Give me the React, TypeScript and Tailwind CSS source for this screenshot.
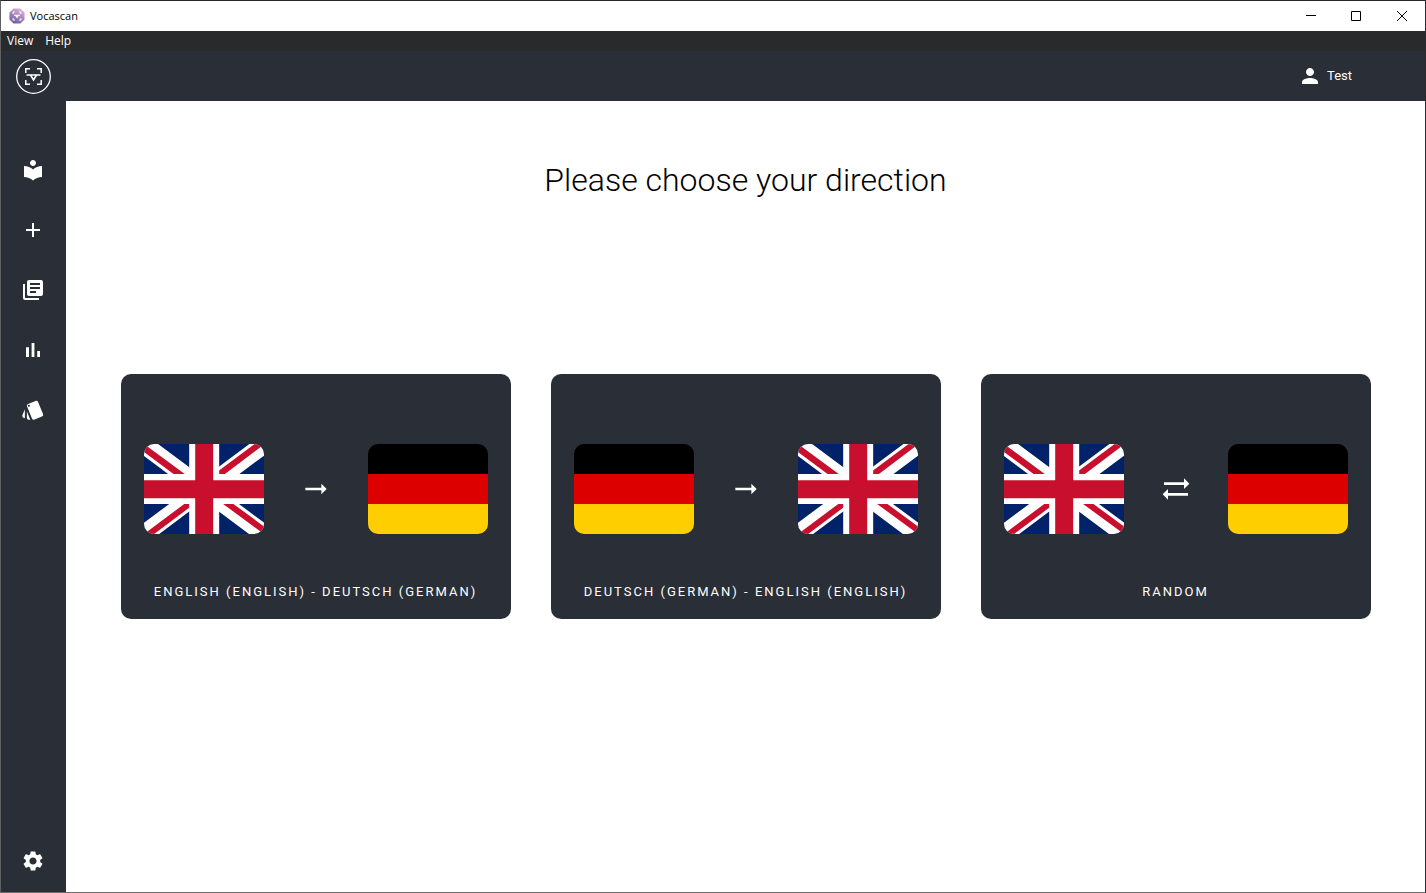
import React from "react";
import type { ComponentType } from "react";
import type { IconType } from "react-icons";
import {
  MdAdd,
  MdArrowRightAlt,
  MdLibraryBooks,
  MdLocalLibrary,
  MdPerson,
  MdSettings,
  MdStyle,
  MdSyncAlt,
} from "react-icons/md";

type Lang = "en" | "de";
type NavIcon = ComponentType<{ className?: string }>;

function BarChartIcon({ className }: { className?: string }) {
  return (
    <svg viewBox="0 0 24 24" className={className} fill="currentColor" aria-hidden="true">
      <path d="M5 9.200h3V19H5zM10.600 5h2.800v14h-2.800zM16.200 13H19v6h-2.800z" />
    </svg>
  );
}

const NAV: { label: string; Icon: NavIcon }[] = [
  { label: "Learn", Icon: MdLocalLibrary },
  { label: "Add vocabulary", Icon: MdAdd },
  { label: "Library", Icon: MdLibraryBooks },
  { label: "Progress", Icon: BarChartIcon },
  { label: "Custom learning", Icon: MdStyle },
];

const DIRECTIONS: { title: string; from: Lang; to: Lang; Icon: IconType }[] = [
  { title: "English (English) - Deutsch (German)", from: "en", to: "de", Icon: MdArrowRightAlt },
  { title: "Deutsch (German) - English (English)", from: "de", to: "en", Icon: MdArrowRightAlt },
  { title: "Random", from: "en", to: "de", Icon: MdSyncAlt },
];

function Flag({ lang }: { lang: Lang }) {
  return (
    <svg viewBox="0 0 640 480" className="h-[90px] w-[120px] shrink-0 rounded-[10px]" aria-hidden="true">
      {lang === "en" ? (
        <>
          <path fill="#012169" d="M0 0h640v480H0z" />
          <path
            fill="#fff"
            d="m75 0 244 181L562 0h78v62L400 241l240 178v61h-80L320 301 81 480H0v-60l239-178L0 64V0h75z"
          />
          <path
            fill="#c8102e"
            d="m424 281 216 159v40L369 281h55zm-184 20 6 35L54 480H0l240-179zM640 0v3L391 191l2-44L590 0h50zM0 0l239 176h-60L0 42V0z"
          />
          <path fill="#fff" d="M241 0v480h160V0H241zM0 160v160h640V160H0z" />
          <path fill="#c8102e" d="M0 193v96h640v-96H0zM273 0v480h96V0h-96z" />
        </>
      ) : (
        <>
          <path fill="#000" d="M0 0h640v160H0z" />
          <path fill="#d00" d="M0 160h640v160H0z" />
          <path fill="#ffce00" d="M0 320h640v160H0z" />
        </>
      )}
    </svg>
  );
}

function ScanMark() {
  return (
    <g fill="none" stroke="#fff">
      <path strokeWidth="1.5" d="M9.800 14V9.700H14M21 9.700h4.200V14M25.200 21v4.300H21M14 25.300H9.800V21" />
      <path strokeWidth="1.500" d="M10.500 16h14" />
      <path strokeWidth="1.600" d="M14.500 16l3 5 3-5" />
    </g>
  );
}

function AppIcon() {
  return (
    <svg viewBox="0 0 35 35" className="size-4" aria-hidden="true">
      <defs>
        <linearGradient id="appIconFill" x1="0.8" y1="0" x2="0.3" y2="1">
          <stop offset="0" stopColor="#e3b6d8" />
          <stop offset="1" stopColor="#6b5a9e" />
        </linearGradient>
      </defs>
      <path d="M10 1h15l9 9v15l-9 9H10l-9-9V10z" fill="url(#appIconFill)" />
      <g fill="none" stroke="#fff" strokeWidth="2.200">
        <path d="M9 13V9h4M22 9h4v4M26 22v4h-4M13 26H9v-4" />
        <path d="M11 16h13M14.500 16l3 5 3-5" />
      </g>
    </svg>
  );
}

function TitleBar() {
  return (
    <div className="flex h-[30px] shrink-0 items-center justify-between bg-white pl-2 text-black">
      <div className="flex items-center gap-[5px] font-['Open_Sans',sans-serif] text-[11px]">
        <AppIcon />
        <span>Vocascan</span>
      </div>
      <div className="flex h-full">
        <button type="button" aria-label="Minimize" className="flex w-[45px] items-center justify-center">
          <svg viewBox="0 0 10 10" className="size-[10px]" stroke="#000">
            <path d="M0 4.500h10" />
          </svg>
        </button>
        <button type="button" aria-label="Maximize" className="flex w-[46px] items-center justify-center">
          <svg viewBox="0 0 10 10" className="size-[10px]" fill="none" stroke="#000">
            <path d="M.5.5h9v9h-9z" />
          </svg>
        </button>
        <button type="button" aria-label="Close" className="flex w-[46px] items-center justify-center">
          <svg viewBox="0 0 10 10" className="size-[10px]" fill="none" stroke="#000">
            <path d="m0 0 10 10M10 0 0 10" />
          </svg>
        </button>
      </div>
    </div>
  );
}

function MenuBar() {
  return (
    <div className="flex h-5 shrink-0 items-center bg-[#292a2c] font-['Open_Sans',sans-serif] text-xs text-white">
      <button type="button" className="px-[6px]">View</button>
      <button type="button" className="px-[6px]">Help</button>
    </div>
  );
}

function NavItem({ label, Icon }: { label: string; Icon: NavIcon }) {
  return (
    <a href="#" aria-label={label} className="flex h-[60px] items-center justify-center">
      <Icon className="size-6" />
    </a>
  );
}

export default function App() {
  return (
    <div className="flex h-screen flex-col border border-t-[#26282c] border-r-[#292a2e] border-b-[#6b6b6b] border-l-[#606060] bg-white font-[Roboto,sans-serif]">
      <TitleBar />
      <MenuBar />
      <header className="flex h-[50px] shrink-0 items-center justify-between bg-[#2a2e37] pr-[73px] pl-[15px] text-white">
        <a href="#" aria-label="Home">
          <svg viewBox="0 0 35 35" className="size-[35px]" aria-hidden="true">
            <circle cx="17.500" cy="17.500" r="16.800" fill="none" stroke="#fff" strokeWidth="1.300" />
            <ScanMark />
          </svg>
        </a>
        <button type="button" className="flex items-center gap-[5px] text-[13px] leading-6">
          <MdPerson className="size-6" />
          Test
        </button>
      </header>
      <div className="flex min-h-0 flex-1">
        <nav className="flex w-[65px] shrink-0 flex-col justify-between bg-[#2a2e37] pt-[39px] pr-[2px] pb-px text-white">
          <div>
            {NAV.map((item) => (
              <NavItem key={item.label} {...item} />
            ))}
          </div>
          <NavItem label="Settings" Icon={MdSettings} />
        </nav>
        <main className="grid flex-1 grid-rows-[1fr_auto_1fr] bg-white">
          <h1 className="pt-[55px] text-center text-[32px] leading-12 font-light text-black">
            Please choose your direction
          </h1>
          <div className="flex justify-center gap-10">
            {DIRECTIONS.map(({ title, from, to, Icon }) => (
              <button
                key={title}
                type="button"
                className="flex h-[245px] w-[390px] flex-col justify-between rounded-[10px] bg-[#2a2e37] px-[23px] pt-[70px] pb-[17px] text-white"
              >
                <span className="flex w-full items-center justify-between">
                  <Flag lang={from} />
                  <Icon className="size-8" />
                  <Flag lang={to} />
                </span>
                <span className="w-full text-center text-[13px] leading-5 tracking-[2px] uppercase">{title}</span>
              </button>
            ))}
          </div>
        </main>
      </div>
    </div>
  );
}
